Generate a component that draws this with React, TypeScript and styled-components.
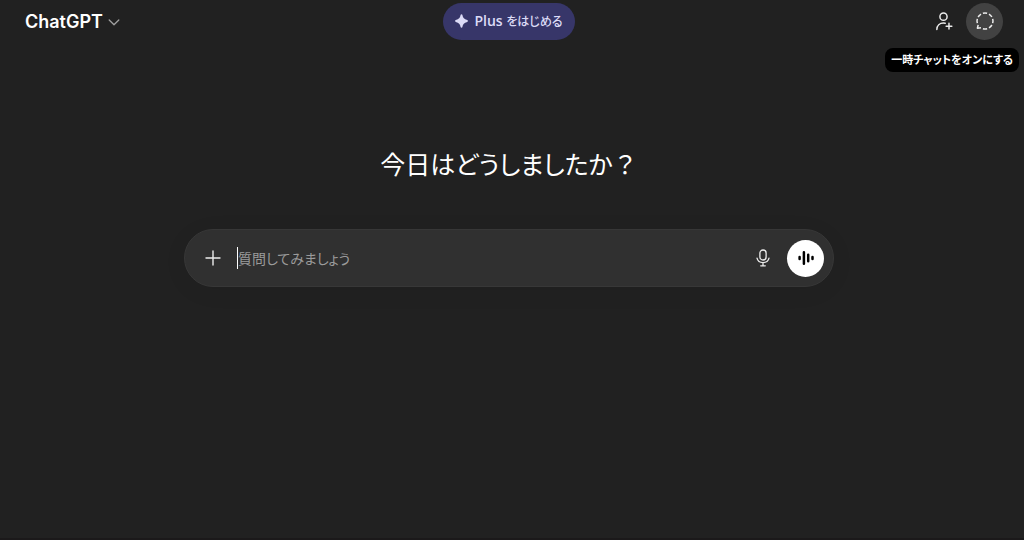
import React from "react";
import styled, { createGlobalStyle } from "styled-components";

const GlobalStyle = createGlobalStyle`
  * { box-sizing: border-box; }
  body {
    margin: 0;
    background: #212121;
    color: #fff;
    font-family: "Noto Sans", "Noto Sans CJK JP", sans-serif;
    font-feature-settings: "palt";
  }
  button, input { font: inherit; font-feature-settings: inherit; color: inherit; border: 0; padding: 0; background: none; }
  button { cursor: pointer; }
`;

const Page = styled.div`
  min-height: 100vh;
  padding-right: 6px;
  display: flex;
  flex-direction: column;
  border-bottom: 2px solid #1b191a;
`;

const Header = styled.header`
  display: grid;
  grid-template-columns: 1fr auto 1fr;
  align-items: center;
  padding: 0 15px 0 25px;
  height: 42px;
`;

const ModelButton = styled.button`
  justify-self: start;
  display: flex;
  align-items: center;
  gap: 5px;
  padding-top: 2px;
  font-family: Inter, sans-serif;
  font-size: 18px;
  font-weight: 600;
  line-height: 28px;
`;

const PlusButton = styled.button`
  display: flex;
  align-items: center;
  gap: 6px;
  height: 37px;
  padding: 0 12px;
  margin-right: 10px;
  border-radius: 20px;
  background: #373669;
  color: #dcdbf6;
  font-family: "Open Sans", "Noto Sans CJK JP", sans-serif;
  font-size: 14px;
  font-weight: 600;
  line-height: 20px;
  white-space: nowrap;
`;

const Kana = styled.span`
  font-size: 12px;
  font-weight: 500;
`;

const Actions = styled.div`
  justify-self: end;
  display: flex;
  align-items: center;
  gap: 4px;
`;

const IconButton = styled.button<{ $active?: boolean }>`
  position: relative;
  display: grid;
  place-items: center;
  width: 37px;
  height: 37px;
  border-radius: 50%;
  color: #ececec;
  background: ${(p) => (p.$active ? "#424242" : "transparent")};
`;

const Tooltip = styled.span`
  position: absolute;
  top: 45px;
  right: -16px;
  padding: 0 6px;
  border-radius: 8px;
  background: #000;
  color: #fff;
  font-size: 11px;
  font-weight: 700;
  line-height: 24px;
  white-space: nowrap;
`;

const Main = styled.main`
  flex: 1;
  display: flex;
  flex-direction: column;
  align-items: center;
  padding: 102px 16px 24px;
`;

const Title = styled.h1`
  margin: 0 0 45px;
  font-size: 25px;
  font-weight: 400;
  line-height: 40px;
`;

const FullWidth = styled.span`
  font-feature-settings: normal;
`;

const Composer = styled.form`
  display: flex;
  align-items: center;
  width: 100%;
  max-width: 650px;
  height: 58px;
  padding: 0 9px;
  border: 1px solid #373737;
  border-radius: 29px;
  background: #303030;
  box-shadow: 0 4px 24px rgba(0, 0, 0, 0.06);
`;

const Caret = styled.span`
  width: 1px;
  height: 22px;
  margin-left: 6px;
  background: #fff;
`;

const Prompt = styled.input`
  flex: 1;
  min-width: 0;
  height: 24px;
  outline: 0;
  font-size: 14px;
  caret-color: transparent;
  &::placeholder { color: #9b9b9b; opacity: 1; }
`;

const VoiceButton = styled(IconButton)`
  margin-left: 6px;
  background: #fff;
  color: #000;
`;

export default function App() {
  return (
    <Page>
      <GlobalStyle />
      <Header>
        <ModelButton type="button">
          ChatGPT
          <svg width="12" height="12" viewBox="0 0 12 12" fill="none" stroke="#a0a0a0" strokeWidth="1.3" strokeLinecap="round" strokeLinejoin="round" aria-hidden="true">
            <path d="M1.2 4 6 8.8 10.8 4" />
          </svg>
        </ModelButton>
        <PlusButton type="button">
          <svg width="13" height="14" viewBox="0 0 13 14" fill="currentColor" aria-hidden="true">
            <path d="M6.5.3c.5 0 .8.3.9.8.6 3 1.7 4.3 4.8 5 .4.1.7.4.7.9s-.3.8-.7.9c-3.1.7-4.2 2-4.8 5-.1.5-.4.8-.9.8s-.8-.3-.9-.8c-.6-3-1.7-4.3-4.8-5C.4 7.8.1 7.5.1 7s.3-.8.7-.9c3.1-.7 4.2-2 4.8-5 .1-.5.4-.8.9-.8Z" />
          </svg>
          <span>Plus <Kana>をはじめる</Kana></span>
        </PlusButton>
        <Actions>
          <IconButton type="button" aria-label="ユーザーを追加">
            <svg width="19" height="19" viewBox="0 0 18 18" fill="none" stroke="currentColor" strokeWidth="1.4" strokeLinecap="round" aria-hidden="true">
              <circle cx="9" cy="4.4" r="3.4" />
              <path d="M2.7 16.5c.1-3.7 2.7-6 6.300-6 .6 0 1.100.1 1.600.2M14.200 10.700v5.400M11.500 13.400h5.400" />
            </svg>
          </IconButton>
          <IconButton type="button" $active aria-describedby="temporary-tip" aria-label="一時チャット">
            <svg width="20" height="20" viewBox="0 0 20 20" fill="none" stroke="currentColor" strokeWidth="1.5" strokeLinejoin="round" aria-hidden="true">
              <path d="M7.900 2.300Q10 1.700 12.100 2.300M14 3.100Q15.900 4.200 16.900 6M17.700 7.900Q18.300 10 17.700 12.100M16.900 14Q15.800 15.900 14 16.900M12.100 17.700Q10 18.300 7.900 17.700M6 3.100Q4.200 4.200 3.100 6M2.300 7.900Q1.700 10 2.300 12.100M3.200 13.800 2.400 17.200 6 16.700" />
            </svg>
            <Tooltip role="tooltip" id="temporary-tip">一時チャットをオンにする</Tooltip>
          </IconButton>
        </Actions>
      </Header>
      <Main>
        <Title>今日はどうしましたか<FullWidth>？</FullWidth></Title>
        <Composer onSubmit={(e) => e.preventDefault()}>
          <IconButton type="button" aria-label="追加">
            <svg width="16" height="16" viewBox="0 0 16 16" fill="none" stroke="currentColor" strokeWidth="1.4" strokeLinecap="round" aria-hidden="true">
              <path d="M8 1v14M1 8h14" />
            </svg>
          </IconButton>
          <Caret />
          <Prompt type="text" aria-label="質問" placeholder="質問してみましょう" />
          <IconButton type="button" aria-label="音声入力">
            <svg width="14" height="18" viewBox="0 0 14 18" fill="none" stroke="currentColor" strokeWidth="1.3" strokeLinecap="round" aria-hidden="true">
              <rect x="3.9" y="1" width="6.2" height="10" rx="3.1" />
              <path d="M1 9.200c.6 2.700 3 4.400 6 4.400s5.400-1.700 6-4.400M7 13.600V16.800M4.700 16.800h4.600" />
            </svg>
          </IconButton>
          <VoiceButton type="button" aria-label="音声モード">
            <svg width="18" height="16" viewBox="0 0 18 16" fill="none" stroke="currentColor" strokeWidth="2.5" strokeLinecap="round" aria-hidden="true">
              <path d="M2.600 7v2M6.900 2.200v11.600M11.200 4.800v6.400M15.500 7v2" />
            </svg>
          </VoiceButton>
        </Composer>
      </Main>
    </Page>
  );
}
